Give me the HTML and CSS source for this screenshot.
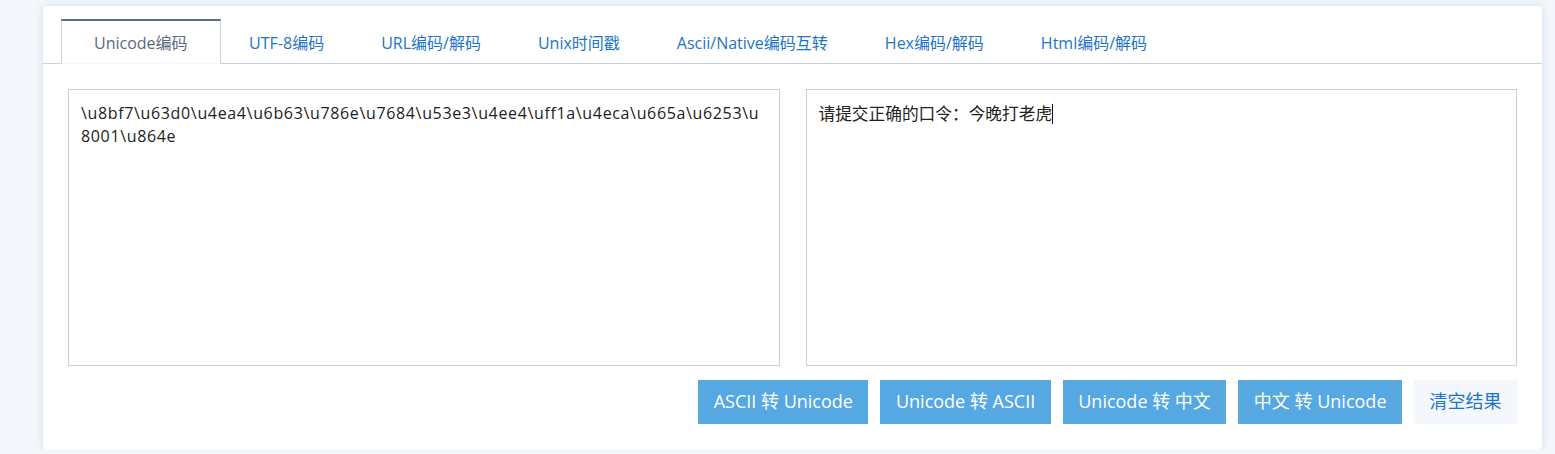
FILE: index.html
```html
<!DOCTYPE html>
<html lang="zh-CN">
<head>
<meta charset="utf-8">
<title>Unicode编码</title>
<link rel="stylesheet" href="styles.css">
</head>
<body>
<div class="card">
  <div class="tabs">
    <div class="tab active">Unicode编码</div>
    <div class="tab">UTF-8编码</div>
    <div class="tab">URL编码/解码</div>
    <div class="tab">Unix时间戳</div>
    <div class="tab">Ascii/Native编码互转</div>
    <div class="tab">Hex编码/解码</div>
    <div class="tab">Html编码/解码</div>
  </div>
  <div class="panel">
    <div class="editors">
      <div class="box code">\u8bf7\u63d0\u4ea4\u6b63\u786e\u7684\u53e3\u4ee4\uff1a\u4eca\u665a\u6253\u8001\u864e</div>
      <div class="box plain">请提交正确的口令：今晚打老虎<span class="caret"></span></div>
    </div>
    <div class="actions">
      <button class="btn">ASCII 转 Unicode</button>
      <button class="btn">Unicode 转 ASCII</button>
      <button class="btn">Unicode 转 中文</button>
      <button class="btn">中文 转 Unicode</button>
      <button class="btn light">清空结果</button>
    </div>
  </div>
</div>
</body>
</html>
```

FILE: styles.css
```css
html, body {
  margin: 0;
  padding: 0;
  background: #f4f7fb;
  font-family: "Open Sans", "Noto Sans CJK SC", sans-serif;
}

.card {
  margin: 6px 13px 0 43px;
  width: 1499px;
  box-shadow: 0 0 9px rgba(150, 180, 220, 0.4);
  border-radius: 4px;
  background: #fff;
}

.tabs {
  display: flex;
  padding: 13px 18px 0 18px;
  border-bottom: 1px solid #c8d0dd;
  background: #fff;
  border-radius: 4px 4px 0 0;
}

.tab {
  height: 42px;
  padding: 0 27.5px;
  display: flex;
  align-items: center;
  font-size: 16px;
  color: #1c75c8;
  border-top: 2px solid transparent;
  border-left: 1px solid transparent;
  border-right: 1px solid transparent;
  margin-bottom: -1px;
  white-space: nowrap;
}

.tab.active {
  color: #5a6a84;
  border-top-color: #5c6a84;
  border-left-color: #c8d0dd;
  border-right-color: #c8d0dd;
  border-bottom: 1px solid #f5f8fc;
  padding: 0 32px;
  background: #fff;
}

.panel {
  padding: 25px;
}

.editors {
  display: grid;
  grid-template-columns: 1fr 1fr;
  gap: 26px;
}

.box {
  height: 251px;
  border: 1px solid #c8ced9;
  padding: 12px;
  font-size: 16px;
  line-height: 23px;
  color: #222;
  word-break: break-all;
}

.box.code {
  letter-spacing: 0.65px;
}

.box.plain {
  font-size: 16.7px;
}

.caret {
  display: inline-block;
  width: 1px;
  height: 20px;
  background: #111;
  vertical-align: -4px;
}

.actions {
  display: flex;
  justify-content: flex-end;
  gap: 12px;
  margin-top: 14px;
}

.btn {
  height: 44px;
  padding: 0 15.5px 5px;
  border: none;
  background: #56a8e2;
  color: #fff;
  font-size: 18px;
  font-family: "Open Sans", "Noto Sans CJK SC", sans-serif;
  white-space: nowrap;
}

.btn.light {
  background: #f4f8fc;
  color: #1c75c8;
}
```
